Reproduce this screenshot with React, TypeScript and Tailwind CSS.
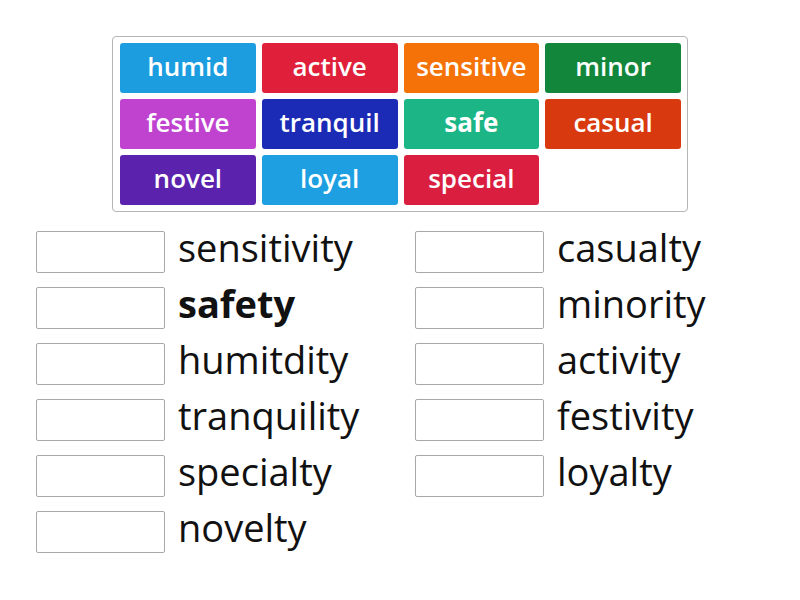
const tiles = [
  { label: "humid", color: "bg-[#1c9de0]" },
  { label: "active", color: "bg-[#e01f3a]" },
  { label: "sensitive", color: "bg-[#f47208]" },
  { label: "minor", color: "bg-[#12873c]" },
  { label: "festive", color: "bg-[#c043d0]" },
  { label: "tranquil", color: "bg-[#1c2bb5]" },
  { label: "safe", color: "bg-[#1bb586]", bold: true },
  { label: "casual", color: "bg-[#d9390e]" },
  { label: "novel", color: "bg-[#5a22ad]" },
  { label: "loyal", color: "bg-[#1e9fe2]" },
  { label: "special", color: "bg-[#da1e40]" },
]

const left = [
  { word: "sensitivity" },
  { word: "safety", bold: true },
  { word: "humitdity" },
  { word: "tranquility" },
  { word: "specialty" },
  { word: "novelty" },
]

const right = [
  { word: "casualty" },
  { word: "minority" },
  { word: "activity" },
  { word: "festivity" },
  { word: "loyalty" },
]

function Row({ word, bold }: { word: string; bold?: boolean }) {
  return (
    <div className="flex items-center h-[42px] gap-[13px]">
      <div className="w-[129px] h-[42px] shrink-0 border border-[#a8a8a8] rounded-[2px] bg-white" />
      <span
        className={`text-[38px] leading-none text-[#111] pb-[11px] ${bold ? "font-bold" : "font-normal"}`}
      >
        {word}
      </span>
    </div>
  )
}

export default function App() {
  return (
    <div
      className="w-[800px] h-[600px] bg-white relative"
      style={{ fontFamily: '"Open Sans", sans-serif' }}
    >
      <div className="pt-[36px] pl-[112px]">
        <div className="w-[576px] h-[176px] border border-[#b5b5b5] rounded-[4px] p-[6px] pl-[7px] grid grid-cols-4 gap-[6px] content-start">
          {tiles.map((t) => (
            <div
              key={t.label}
              className={`${t.color} h-[50px] rounded-[3px] flex items-center justify-center text-white text-[26px] leading-none pb-[5px] ${t.bold ? "font-bold" : "font-semibold"}`}
            >
              {t.label}
            </div>
          ))}
        </div>
      </div>
      <div className="flex pt-[19px] pl-[36px]">
        <div className="flex flex-col gap-[14px] w-[379px]">
          {left.map((r) => (
            <Row key={r.word} {...r} />
          ))}
        </div>
        <div className="flex flex-col gap-[14px]">
          {right.map((r) => (
            <Row key={r.word} {...r} />
          ))}
        </div>
      </div>
    </div>
  )
}
